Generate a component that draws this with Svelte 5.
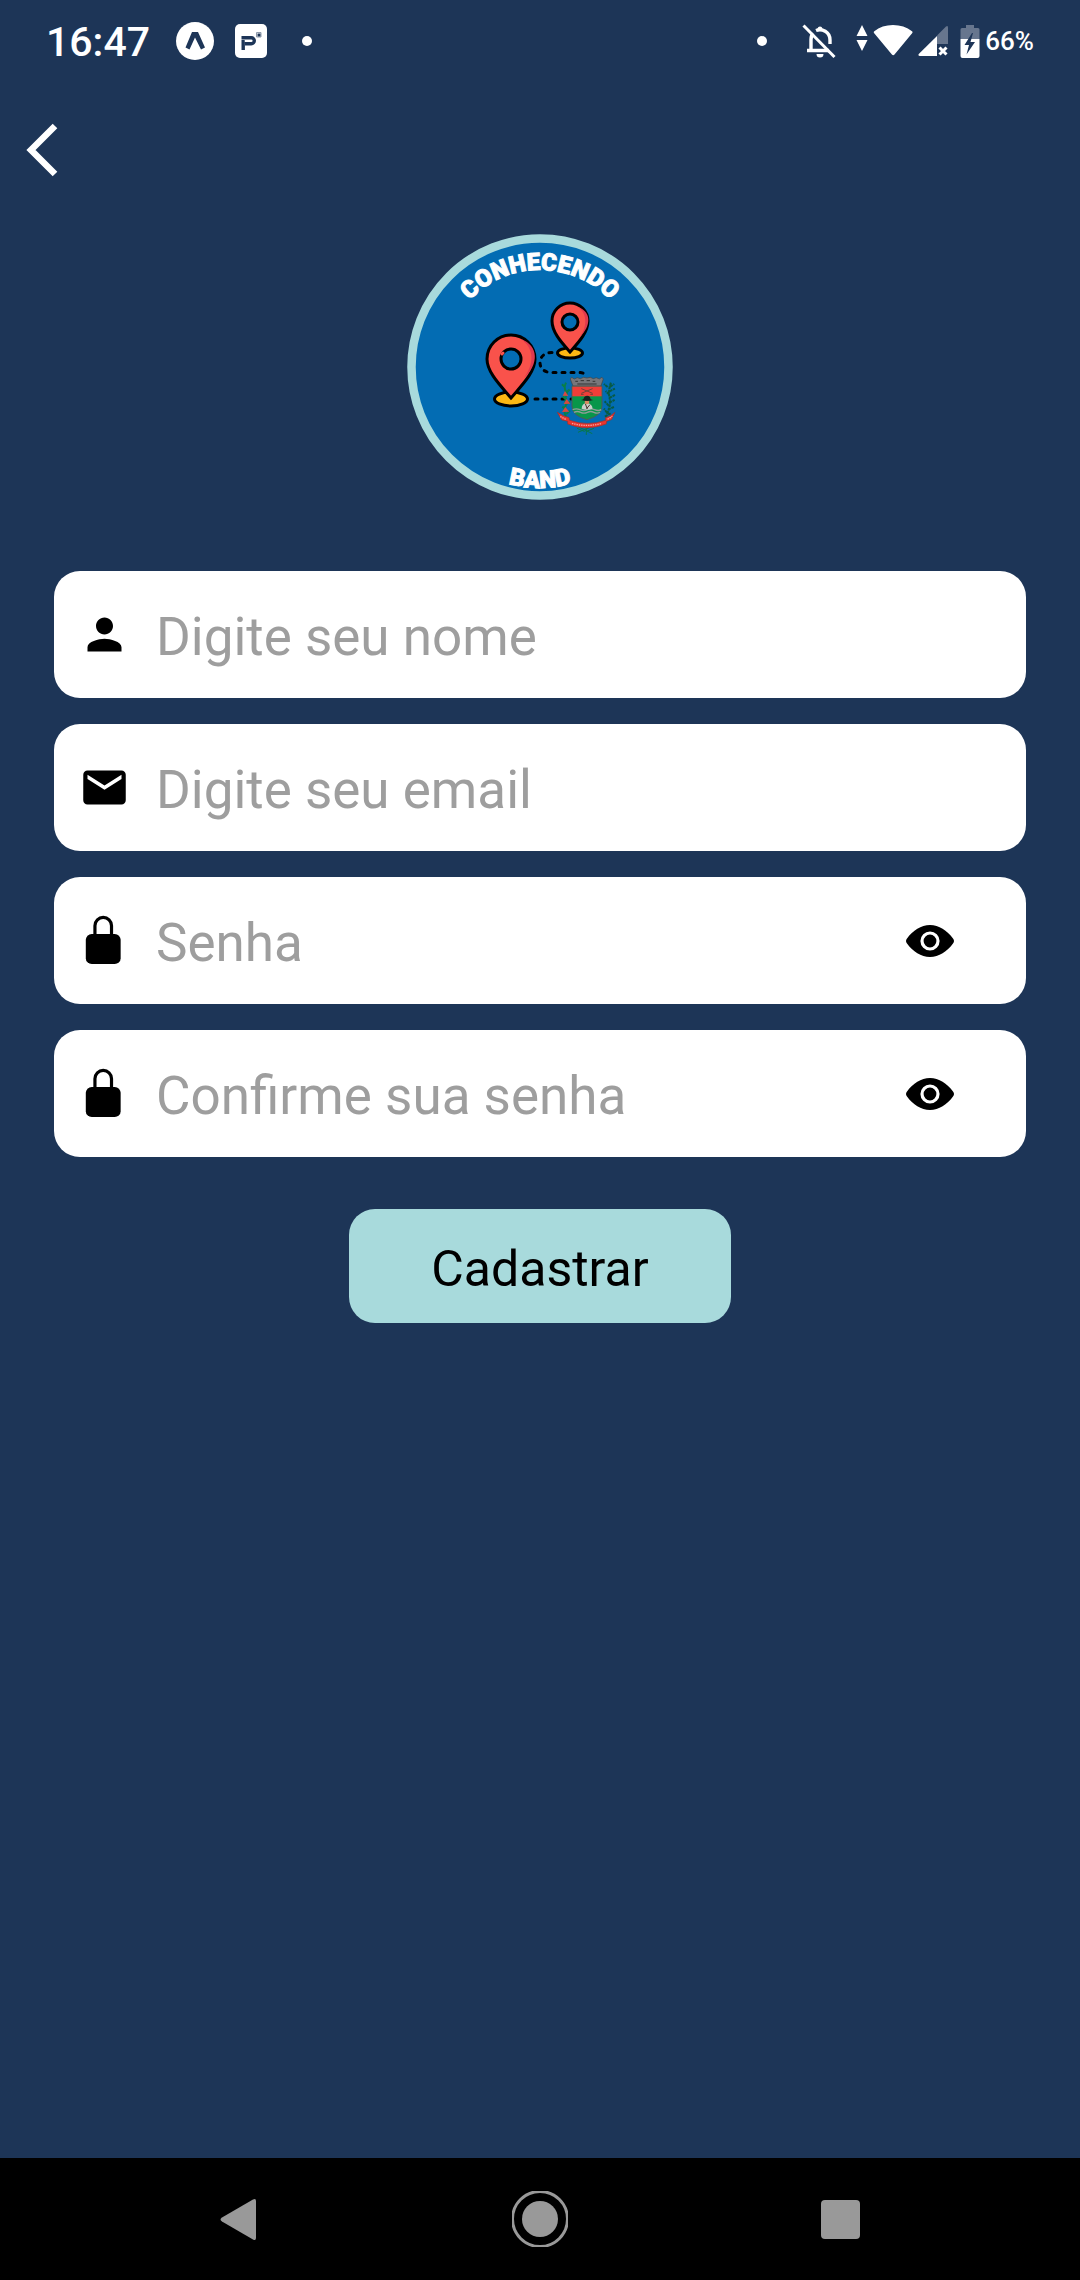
<script>
  let show = $state([false, false]);
  const fields = [
    { id: 'nome', label: 'Digite seu nome', icon: 'person', type: 'text' },
    { id: 'email', label: 'Digite seu email', icon: 'mail', type: 'email' },
    { id: 'senha', label: 'Senha', icon: 'lock', type: 'password', eye: 0 },
    { id: 'confirma', label: 'Confirme sua senha', icon: 'lock', type: 'password', eye: 1 }
  ];
</script>

<div class="screen">
  <header class="status">
    <span class="time">16:47</span>
    <svg class="expo" width="38" height="38" viewBox="0 0 38 38" aria-hidden="true">
      <circle cx="19" cy="19" r="19" fill="#fff" />
      <path d="M16 10h6l7 15.500-4 2L19 15.500 13.500 27.500l-4-2z" fill="#1d3557" />
    </svg>
    <svg class="pix" width="32" height="34" viewBox="0 0 32 34" aria-hidden="true">
      <rect width="32" height="34" rx="5" fill="#fff" />
      <path d="M8.200 26v-8.300h1.500M6.500 13.700h9.800a3 3 0 0 1 0 6H10" fill="none" stroke="#1d3557" stroke-width="3.400" />
      <path d="M21.500 8.500h4.500v4.500h-4.500z" fill="#fff" stroke="#8e9aab" />
      <path d="M22.500 9.500h3v3h-3z" fill="#1d3557" />
    </svg>
    <span class="dot"></span>
    <span class="grow"></span>
    <span class="dot"></span>
    <svg class="bell" width="34" height="36" viewBox="0 0 34 36" fill="none" stroke="#fff" aria-hidden="true">
      <path d="M9 28V16.500c0-3 1-5.500 3-7.500M14 7.500c6-2.500 14 1.500 14 9.500v4M5 27.500h22" stroke-width="3.400" />
      <path d="M15.500 5.500a2.600 2.600 0 0 1 5 0v2h-5zM14.500 31h7a3.500 3.500 0 0 1-7 0z" fill="#fff" stroke="none" />
      <path d="M4 1.500 35.500 32" stroke="#1d3557" stroke-width="3" />
      <path d="M1.500 2.500 32.500 34" stroke-width="3" />
    </svg>
    <svg class="net" width="58" height="34" viewBox="0 0 58 34" fill="#fff" aria-hidden="true">
      <path d="M6 1 11.500 12H.500zM.500 16h11L6 27z" />
      <path d="M18 9q-.8-1 .300-1.800Q26 1 37 1t19 6.200q1.100.8.300 1.800L38.500 30.500q-1.300 1.300-2.600 0z" />
    </svg>
    <svg class="signal" width="31" height="32" viewBox="0 0 31 32" aria-hidden="true">
      <path d="M19 10.500 28 1.500q2-1.500 2 1V19H19z" fill="#67768e" />
      <path d="M19 11v20H2q-2.500-.500-1-2.200z" fill="#fff" />
      <path d="m21.500 22.500 7 7m0-7-7 7" stroke="#fff" stroke-width="3" />
    </svg>
    <svg class="battery" width="20" height="34" viewBox="0 0 20 34" aria-hidden="true">
      <path d="M6 1h8v3h4q1.500 0 1.500 1.500V15h-19V5.500Q.5 4 2 4h4z" fill="#67768e" />
      <path d="M.500 15h19v17q0 2-2 2h-15q-2 0-2-2z" fill="#fff" />
      <path d="M12 9 4.500 21H9l-2.500 9.500L15 18h-4.500L13 9z" fill="#1d3557" />
    </svg>
    <span class="pct">66%</span>
  </header>

  <main>
    <button class="back" aria-label="Voltar">
      <svg width="34" height="54" viewBox="0 0 34 54" aria-hidden="true">
        <path d="M30 3 6 27l24 24" fill="none" stroke="#fff" stroke-width="6.500" />
      </svg>
    </button>

    <svg class="logo" width="266" height="266" viewBox="0 0 266 266" role="img" aria-label="Conhecendo Band">
      <defs>
        <path id="arc-top" d="M36 133a97 97 0 0 1 194 0" />
        <path id="arc-bottom" d="M12 133a121 121 0 0 0 242 0" />
      </defs>
      <circle cx="133" cy="133" r="128.500" fill="#036cb3" stroke="#a8dadc" stroke-width="8.500" />
      <text class="arc"><textPath href="#arc-top" startOffset="50%">CONHECENDO</textPath></text>
      <text class="arc"><textPath href="#arc-bottom" startOffset="50%">BAND</textPath></text>

      <!-- route and map pins -->
      <g stroke="#000" stroke-width="3" stroke-linecap="round" fill="none">
        <path d="M145 118.500c-7 0-12 4-12 10s4 10 12 10h27q6 0 8 4" stroke-dasharray="3 6" />
        <path d="M128 165h38" stroke-dasharray="3 6" />
        <ellipse cx="104" cy="165" rx="16.500" ry="7" fill="#fdb813" />
        <path d="M104 164C95 153 80 139 80 125a24 24 0 0 1 48 0c0 14-15 28-24 39z" fill="#f9524b" />
        <path d="M114 105c14 10 13 25 3 39 15-14 15-32-3-39z" fill="#e0394f" stroke="none" />
        <ellipse cx="163" cy="119" rx="12.500" ry="5" fill="#fdb813" />
        <path d="M163 118c-7-8-18-19-18-31a18 18 0 0 1 36 0c0 12-11 23-18 31z" fill="#f9524b" />
        <path d="M171 73c10 7 9 20 2 30 11-11 12-25-2-30z" fill="#e0394f" stroke="none" />
        <circle cx="104" cy="125" r="10" fill="#036cb3" />
        <circle cx="163" cy="88" r="8" fill="#036cb3" />
        <path d="m95 120 1-1" stroke="#f9524b" />
      </g>

      <!-- coat of arms -->
      <g transform="translate(143 136) scale(.333)" fill="none">
        <path d="M61 27 65 22l8 5 9-4 9 3 10-4 10 2 10-2 9 4 9-3 9 4 8-5 4 5-7 21H69z" fill="#77777b" stroke="#444" stroke-width="2" />
        <path d="M76 34h8m8-2h10m8 0h10m8 2h8m-54 8h58" stroke="#333" stroke-width="3" />
        <path d="M66 49h90v60q0 28-45 40-45-12-45-40z" fill="#08964a" stroke="#4c5a55" stroke-width="3" />
        <path d="M67 50h88v29H67z" fill="#ef3e38" />
        <path d="m94 70 34-14m-34 0 34 14M93 73h8m20 0h8" stroke="#704238" stroke-width="3" />
        <path d="M68 119q11-5 22 0t22 0 22 0 20 0m-82 8q10-5 20 0t20 0 20 0 18 0" stroke="#8f9d98" stroke-width="4" />
        <path d="M95 116q0-15 15-18 17 3 18 18-17 6-33 0z" fill="#c9d0c9" />
        <path d="m106 101 6 16m8-13-10 12" stroke="#493128" stroke-width="3" />
        <circle cx="111" cy="96" r="7" fill="#d98b60" />
        <path d="M93 90q8 0 10-9 9-8 17 0 1 9 10 9-18 6-37 0z" fill="#15231e" />
        <path d="M48 38q-9 18 3 31-8 20-3 36-9 17 0 35M45 52l-9-9m12 25 11-9m-9 29-12-8m12 22 11-8m-13 25-11-9m12 22 11-10" stroke="#087f48" stroke-width="6" />
        <path d="m45 63 10 15-17-1zm5 24 11 14-20 1zm-4 24 12 14-22 1z" fill="#d74940" />
        <path d="M183 38q-8 23-5 43 7 20-9 58M181 50l12-8m-14 22 16-8m-18 17-10-10m11 21 17-9m-17 23 16-8m-18 17-12-13m10 25 18-8m-21 17-9-12m3 24 17-10m-9-79-11-9" stroke="#085a43" stroke-width="6" stroke-dasharray="9 2" />
        <path d="m82 169 45 22m7-24-50 20m25-19v27m-5-10-23-10m29 9 22-9" stroke="#08774a" stroke-width="3" />
        <path d="m22 127 13 23 18 4v8q57 23 116 0l1-8 15-5 10-22q-11 12-29 17l2 7q-56 19-109 0l-2-8q-18-4-35-16z" fill="#eb342d" stroke="#9d302d" stroke-width="2" />
        <path d="M66 160q45 13 90 0" stroke="#f4aaa4" stroke-width="4" stroke-dasharray="4 3" />
        <path d="m31 140 16 8m126 0 14-9" stroke="#f4aaa4" stroke-width="4" stroke-dasharray="4 3" />
      </g>
    </svg>

    <form onsubmit={(e) => e.preventDefault()}>
      {#each fields as f}
        <div class="field">
          <label for={f.id} aria-label={f.label}>
            <svg width="51" height="51" viewBox="0 0 24 24" aria-hidden="true">
              {#if f.icon === 'person'}
                <path d="M12 12c2.210 0 4-1.790 4-4s-1.790-4-4-4-4 1.790-4 4 1.790 4 4 4zm0 2c-2.670 0-8 1.340-8 4v2h16v-2c0-2.660-5.330-4-8-4z" />
              {:else if f.icon === 'mail'}
                <path d="M20 4H4c-1.100 0-1.990.9-1.990 2L2 18c0 1.100.9 2 2 2h16c1.100 0 2-.9 2-2V6c0-1.100-.9-2-2-2zm0 4-8 5-8-5V6l8 5 8-5v2z" />
              {:else}
                <rect x="3.200" y="8.900" width="16.400" height="14.200" rx="2.800" />
                <path d="M7.500 10V5a3.900 3.900 0 0 1 7.800 0V10" fill="none" stroke="#000" stroke-width="1.500" />
              {/if}
            </svg>
          </label>
          <input
            id={f.id}
            type={f.eye !== undefined && show[f.eye] ? 'text' : f.type}
            placeholder={f.label}
          />
          {#if f.eye !== undefined}
            <button type="button" class="eye" aria-label="Mostrar senha" onclick={() => (show[f.eye] = !show[f.eye])}>
              <svg width="48" height="32" viewBox="0 0 48 32" aria-hidden="true">
                <path d="M1 18.500q-2-2.500 0-5C7 5.500 15 0 24 0s17 5.500 23 13.500q2 2.500 0 5C41 26.500 33 32 24 32S7 26.500 1 18.500z" />
                <circle cx="24" cy="16" r="8" fill="none" stroke="#fff" stroke-width="3.200" />
              </svg>
            </button>
          {/if}
        </div>
      {/each}
      <button class="submit" type="submit">Cadastrar</button>
    </form>
  </main>

  <nav>
    <button aria-label="Voltar">
      <svg width="56" height="56" viewBox="0 0 56 56" aria-hidden="true">
        <path d="M10 26.500 41 8.500q3-1.500 3 1.500v37q0 3-3 1.500L10 30.500q-3-2 0-4z" />
      </svg>
    </button>
    <button aria-label="Início">
      <svg width="56" height="56" viewBox="0 0 56 56" aria-hidden="true">
        <circle cx="28" cy="28" r="18" />
        <circle cx="28" cy="28" r="27.500" fill="none" stroke="#999" stroke-width="3" />
      </svg>
    </button>
    <button aria-label="Recentes">
      <svg width="56" height="56" viewBox="0 0 56 56" aria-hidden="true">
        <rect x="9" y="9" width="39" height="39" rx="4" />
      </svg>
    </button>
  </nav>
</div>

<style>
  :global(body) {
    margin: 0;
    background: #1d3557;
  }
  .screen {
    min-height: 100vh;
    display: flex;
    flex-direction: column;
    background: #1d3557;
    font-family: Roboto, sans-serif;
    color: #fff;
  }
  svg {
    display: block;
    flex: none;
  }
  button {
    border: 0;
    padding: 0;
    background: none;
    font: inherit;
    cursor: pointer;
  }
  .status {
    display: flex;
    align-items: center;
    height: 81px;
    padding: 0 46px;
  }
  .time {
    padding-top: 2px;
    font-size: 41px;
    font-weight: 500;
    line-height: 48px;
  }
  .expo {
    margin-left: 26px;
  }
  .pix {
    margin-left: 21px;
  }
  .dot {
    width: 10px;
    height: 10px;
    border-radius: 50%;
    background: #fff;
    margin-left: 35px;
  }
  .grow {
    flex: 1;
  }
  .bell {
    margin-left: 35px;
  }
  .net {
    margin-left: 20px;
  }
  .signal {
    margin-left: 4px;
  }
  .battery {
    margin-left: 11px;
  }
  .pct {
    margin-left: 5px;
    font-size: 26px;
    font-weight: 500;
    line-height: 32px;
  }
  main {
    flex: 1;
    display: flex;
    flex-direction: column;
    align-items: center;
  }
  .back {
    align-self: flex-start;
    margin: 42px 25px 0;
  }
  .logo {
    margin-top: 57px;
  }
  .arc {
    font-family: Roboto, sans-serif;
    font-size: 24px;
    font-weight: 900;
    text-anchor: middle;
    fill: #fff;
    stroke: #fff;
    stroke-width: 1px;
  }
  form {
    align-self: stretch;
    display: flex;
    flex-direction: column;
    gap: 26px;
    padding: 71px 54px 0;
  }
  .field {
    display: flex;
    align-items: center;
    height: 127px;
    padding: 0 72px 0 25px;
    border-radius: 26px;
    background: #fff;
    box-sizing: border-box;
    color: #000;
  }
  input {
    flex: 1;
    min-width: 0;
    height: 100%;
    margin-left: 26px;
    padding: 4px 0 0;
    border: 0;
    outline: 0;
    box-sizing: border-box;
    background: none;
    font: 400 53px/62px Roboto, sans-serif;
    color: #000;
  }
  input::placeholder {
    color: #9e9e9e;
    opacity: 1;
  }
  .submit {
    align-self: center;
    width: 382px;
    height: 114px;
    margin-top: 26px;
    padding-top: 6px;
    border-radius: 26px;
    background: #a8dadc;
    color: #000;
    font-size: 50px;
    line-height: 60px;
  }
  nav {
    display: flex;
    justify-content: space-between;
    align-items: center;
    height: 122px;
    padding: 0 212px;
    background: #000;
  }
  nav svg {
    fill: #999;
  }
</style>
